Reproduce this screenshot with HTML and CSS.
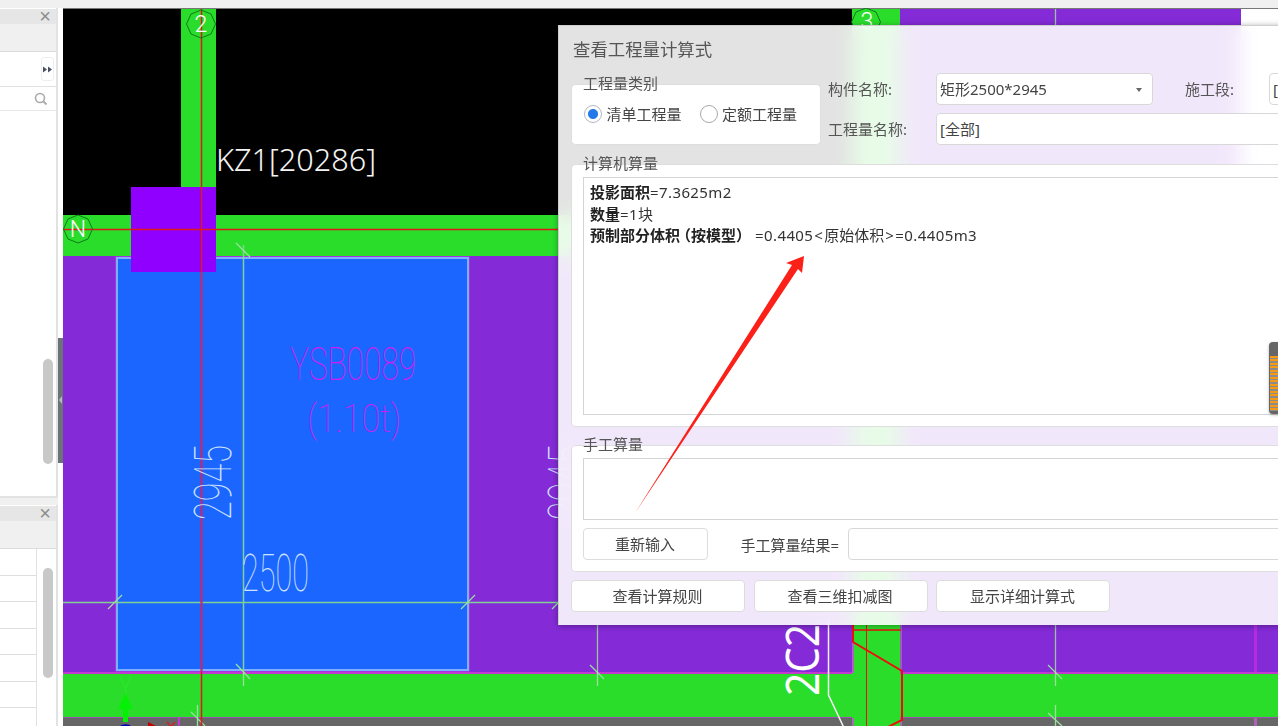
FILE: index.html
```html
<!DOCTYPE html>
<html lang="zh-CN">
<head>
<meta charset="utf-8">
<title>查看工程量计算式</title>
<link rel="stylesheet" href="styles.css">
</head>
<body>
<div class="app">
  <aside class="side">
    <section class="panel panel-top">
      <div class="panel-head"><span class="close">×</span></div>
      <div class="panel-tools"></div>
      <div class="panel-row"><span class="more">
        <svg width="9" height="7" viewBox="0 0 9 7"><path d="M0 .5 4 3.500 0 6.500Z M5 .5 9 3.500 5 6.500Z" fill="#4a4f63"/></svg>
      </span></div>
      <div class="panel-search">
        <svg width="14" height="14" viewBox="0 0 14 14"><circle cx="6" cy="6" r="4.500" fill="none" stroke="#aaa" stroke-width="1.600"/><path d="M9.500 9.500 12.500 12.500" stroke="#aaa" stroke-width="1.800"/></svg>
      </div>
      <div class="panel-body"><span class="thumb thumb-a"></span></div>
    </section>
    <section class="panel panel-bottom">
      <div class="panel-head"><span class="close">×</span></div>
      <div class="panel-tools"></div>
      <div class="grid-body">
        <div class="grid-rows">
          <div class="grid-row"></div><div class="grid-row"></div><div class="grid-row"></div>
          <div class="grid-row"></div><div class="grid-row"></div><div class="grid-row"></div>
        </div>
        <span class="thumb thumb-b"></span>
      </div>
    </section>
  </aside>
  <div class="splitter"><span class="split-bar"><i class="split-arrow"></i></span></div>
  <main class="viewport">
    <svg class="drawing" width="1215" height="718" viewBox="63 8 1215 718">
      <rect x="63" y="8" width="1215" height="718" fill="#000"/>
      <rect x="63" y="8" width="1215" height="1" fill="#777"/>
      <rect x="900" y="9" width="341" height="640" fill="#842bd7"/>
      <rect x="181" y="9" width="35" height="190" fill="#2bdd2b"/>
      <rect x="63" y="215" width="1178" height="41" fill="#2bdd2b"/>
      <rect x="63" y="256" width="790" height="416" fill="#842bd7"/>
      <rect x="900" y="256" width="378" height="416" fill="#842bd7"/>
      <rect x="1241" y="9" width="37" height="250" fill="#fff"/>
      <rect x="63" y="672" width="1215" height="2" fill="#c43ad0"/>
      <rect x="63" y="674" width="1215" height="44" fill="#2bdd2b"/>
      <rect x="63" y="718" width="790" height="8" fill="#666"/>
      <rect x="902" y="718" width="376" height="8" fill="#666"/>
      <rect x="63" y="717" width="1215" height="1" fill="#a050b0"/>
      <rect x="852" y="9" width="48" height="717" fill="#2bdd2b"/>
      <rect x="852" y="625" width="2" height="48" fill="#b060c0"/>
      <rect x="900" y="625" width="2" height="48" fill="#9a60b8"/>
      <rect x="900" y="718" width="2" height="8" fill="#a070b0"/>
      <rect x="852" y="718" width="2" height="8" fill="#a070b0"/>
      <rect x="1254" y="625" width="3" height="47" fill="#b52ce0"/>
      <rect x="1254" y="718" width="3" height="8" fill="#b060b8"/>
      <rect x="178" y="718" width="2" height="8" fill="#c43ad0"/>

      <rect x="115.500" y="256.500" width="354" height="415" fill="#c040f0"/>
      <rect x="117" y="258" width="351" height="412" fill="#1a66ff" stroke="#7fb0ff" stroke-width="2"/>

      <g stroke="#7fd292" stroke-width="1.500" fill="none">
        <path d="M243.500 245V672M63 602.500H558"/>
      </g>
      <path d="M597.500 625V672M1055.500 9V25M1055.500 625V672" stroke="#9fc09f" stroke-width="1.300" fill="none"/>
      <g stroke="#98e09c" stroke-width="1.300" fill="none">
        <path d="M236 243 250 257"/>
        <path d="M108 609 122 595M461 609 475 595M552 609 558 603"/>
        <path d="M236 664 243.500 672 250 679M243.500 672V686"/>
        <path d="M590 665 604 679M597.500 672V686"/>
        <path d="M191 712 205 726M197.500 705V726M1048 665 1062 679M1055.500 672V686M1048 713 1062 726M1055.500 705V726"/>
      </g>

      <rect x="131" y="187" width="85" height="85" fill="#8f00ff"/>
      <path d="M201.500 9V726M63 229.500H558" stroke="#e01818" stroke-width="1.500" fill="none"/>
      <path d="M201.500 272V672" stroke="#c0287a" stroke-width="1.800" fill="none"/>

      <g fill="none" stroke="#0f7a1c" stroke-width="1">
        <path d="M201 10 211 14 215.500 24 211 34 201 38 191 34 186.500 24 191 14Z"/>
        <path d="M78 215 88 219 92.500 229 88 239 78 243 68 239 63.500 229 68 219Z"/>
        <path d="M866 8 876 12 880.500 22 876 32 866 36 856 32 851.500 22 856 12Z"/>
      </g>
      <text class="axis" x="201" y="32" text-anchor="middle">2</text>
      <text class="axis" x="78" y="237" text-anchor="middle">N</text>
      <text class="axis" x="867" y="29" text-anchor="middle">3</text>

      <text class="label-kz" x="216" y="171" textLength="160" lengthAdjust="spacingAndGlyphs">KZ1[20286]</text>
      <text class="cad cad-pink" x="290" y="380" textLength="126" lengthAdjust="spacingAndGlyphs">YSB0089</text>
      <text class="cad cad-pink-sm" x="307" y="432" textLength="94" lengthAdjust="spacingAndGlyphs">(1.10t)</text>
      <text class="cad cad-dim" x="242" y="591" textLength="67" lengthAdjust="spacingAndGlyphs">2500</text>
      <text class="cad cad-dim" transform="translate(231 520) rotate(-90)" x="0" y="0" textLength="75" lengthAdjust="spacingAndGlyphs">2945</text>
      <text class="cad cad-dim" transform="translate(585 520) rotate(-90)" x="0" y="0" textLength="75" lengthAdjust="spacingAndGlyphs">2945</text>
      <text class="label-2c" transform="translate(819 696) rotate(-90)" x="0" y="0" textLength="72" lengthAdjust="spacingAndGlyphs">2C2</text>

      <path d="M828.500 620V695L845 730" stroke="#f4f4f4" stroke-width="1.500" fill="none"/>
      <g stroke="#ee0d0d" fill="none">
        <path d="M853 630H901" stroke-width="1.500"/>
        <path d="M866.500 625V726" stroke-width="1"/>
        <path d="M853 625V642L902 671V720L888 727" stroke-width="2"/>
      </g>

      <path d="M125 693 118 709H123V722H128V709H133Z" fill="#06f006"/>
      <path d="M120 677 125.500 688 131 677M125.500 688V693" stroke="#22ee22" stroke-width="1" fill="none"/>
      <path d="M120 726a6 3 0 0 1 11 0Z" fill="#0000b0"/>
      <path d="M148 722 156 726H148Z" fill="#c00000"/>
      <path d="M167 722 175 731M175 722 167 731" stroke="#e01818" stroke-width="1.300"/>
    </svg>

    <section class="dialog">
      <h1 class="dialog-title">查看工程量计算式</h1>
      <div class="dialog-top">
        <fieldset class="group group-kind">
          <legend class="legend">工程量类别</legend>
          <label class="radio"><span class="radio-dot is-on"></span>清单工程量</label>
          <label class="radio"><span class="radio-dot"></span>定额工程量</label>
        </fieldset>
        <div class="fields">
          <div class="field-row">
            <span class="field-label">构件名称:</span>
            <span class="box box-select">矩形2500*2945<i class="caret"></i></span>
            <span class="field-label field-label-stage">施工段:</span>
            <span class="box box-stage">[全部]</span>
          </div>
          <div class="field-row">
            <span class="field-label">工程量名称:</span>
            <span class="box box-wide">[全部]</span>
          </div>
        </div>
      </div>

      <fieldset class="group group-auto">
        <legend class="legend">计算机算量</legend>
        <div class="result">
          <p class="line"><b>投影面积</b><span class="num">=7.3625m2</span></p>
          <p class="line"><b>数量</b><span class="num">=1</span>块</p>
          <p class="line"><b>预制部分体积<span class="paren">（按模型）</span></b><span class="num num-gap">=0.4405</span><span class="num num-lt">&lt;</span>原始体积<span class="num num-lt">&gt;</span><span class="num">=0.4405m3</span></p>
          <span class="stripe-bar"><i class="stripes"></i></span>
        </div>
      </fieldset>

      <fieldset class="group group-manual">
        <legend class="legend">手工算量</legend>
        <div class="manual-input"></div>
        <div class="manual-row">
          <button class="btn btn-reset" type="button">重新输入</button>
          <span class="manual-label">手工算量结果=</span>
          <span class="box box-result"></span>
        </div>
      </fieldset>

      <div class="dialog-actions">
        <button class="btn btn-action" type="button">查看计算规则</button>
        <button class="btn btn-action" type="button">查看三维扣减图</button>
        <button class="btn btn-action" type="button">显示详细计算式</button>
      </div>
    </section>

    <svg class="arrow" width="190" height="270" viewBox="630 250 190 270">
      <path d="M635 513 792 265 786 263 804 256 802 273 798 269Z" fill="#fb2018"/>
    </svg>
  </main>
</div>
</body>
</html>
```
FILE: styles.css
```css
* { box-sizing: border-box; }
html, body { margin: 0; height: 100%; overflow: hidden; background: #f0f0f0; }
body { font-family: "Noto Sans", "Noto Sans CJK SC", sans-serif; color: #444; }

.app { display: flex; width: 1278px; height: 726px; padding-top: 8px; overflow: hidden; }

/* left dock */
.side { width: 58px; height: 718px; display: flex; flex-direction: column; flex: none; }
.panel { background: #fff; border-right: 2px solid #e2e2e2; display: flex; flex-direction: column; }
.panel-top { height: 490px; border-bottom: 2px solid #e2e2e2; }
.panel-bottom { margin-top: 7px; flex: 1; }
.panel-head { height: 15px; margin-top: 1px; background: #e6e6e6; position: relative; flex: none; text-align: right; padding-right: 5px; }
.close { font: 20px/15px "Liberation Sans", sans-serif; color: #8c8c8c; display: block; }
.panel-tools { height: 28px; background: #f0f0f0; border-bottom: 1px solid #dcdcdc; flex: none; }
.panel-row { height: 35px; border-bottom: 1px solid #e0e0e0; display: flex; justify-content: flex-end; align-items: center; padding-right: 2px; flex: none; }
.more { width: 13px; height: 24px; border: 1px solid #eee; border-radius: 3px; display: flex; align-items: center; justify-content: center; }
.panel-search { height: 24px; border-bottom: 1px solid #e6e6e6; display: flex; justify-content: flex-end; align-items: center; padding-right: 8px; flex: none; }
.panel-body { flex: 1; position: relative; }
.thumb { position: absolute; display: block; width: 10px; left: 43px; background: #c8c8c8; border-radius: 5px; }
.thumb-a { top: 248px; height: 105px; }
.thumb-b { top: 19px; height: 110px; }
.grid-body { flex: 1; position: relative; }
.grid-rows { width: 37px; border-right: 1px solid #e2e2e2; height: 100%; padding-top: 0; }
.grid-row { height: 26.500px; border-bottom: 1px solid #dedede; }

.splitter { width: 5px; height: 718px; background: #fff; flex: none; position: relative; }
.split-bar { position: absolute; left: 0; top: 330px; width: 5px; height: 125px; background: #6b7378; }
.split-arrow { position: absolute; left: 1px; top: 58px; border: 4px solid transparent; border-left-width: 0; border-right: 3px solid #b8bcc0; }

/* drawing */
.viewport { flex: none; width: 1215px; height: 718px; position: relative; overflow: hidden; }
.drawing { display: block; }
.axis { font: 300 23px "Roboto", sans-serif; fill: #fff; }
.label-kz { font: 300 32px "Noto Sans", sans-serif; fill: #f4f4f4; }
.cad { font-family: "Roboto", sans-serif; font-weight: 100; }
.cad-pink { font-size: 47px; fill: #d21cf0; }
.cad-pink-sm { font-size: 38px; fill: #d21cf0; }
.cad-dim { font-size: 51px; fill: #cfe2ff; }
.label-2c { font: 46px "Noto Sans", sans-serif; fill: #fff; }
.arrow { position: absolute; left: 567px; top: 242px; }

/* dialog */
.dialog { position: absolute; left: 495px; top: 17px; width: 770px; height: 600px; padding: 0 13px; background: rgba(255, 255, 255, .89); -webkit-backdrop-filter: blur(10px); backdrop-filter: blur(10px); box-shadow: 0 1px 6px rgba(0, 0, 0, .35); border-top: 1px solid #cfcfcf; border-left: 1px solid #cfcfcf; }
.dialog-title { margin: 0; padding: 10px 0 0 1px; font-size: 17.400px; line-height: 26px; height: 37px; font-weight: 400; color: #555; }
.dialog-top { display: flex; align-items: flex-start; gap: 8px; height: 102px; }
.group { margin: 0; padding: 0; min-width: 0; border: 0; background: #fff; border-radius: 4px; box-shadow: 0 0 0 1px #dedede; position: relative; }
.legend { position: absolute; left: 11px; top: -12px; padding: 0; font-size: 15px; line-height: 20px; color: #555; white-space: nowrap; }
.group-kind { flex: none; width: 248px; height: 59px; margin-top: 22px; display: flex; gap: 18px; padding: 19px 0 0 12px; }
.radio { display: flex; align-items: center; gap: 4.500px; font-size: 15px; line-height: 20px; height: 20px; color: #444; white-space: nowrap; }
.radio-dot { width: 18px; height: 18px; border-radius: 50%; background: #fff; border: 1px solid #a8a8a8; flex: none; display: block; }
.radio-dot.is-on { background: radial-gradient(circle, #2478e8 0 4.500px, #fff 5.500px); border-color: #b0b8c4; }
.fields { flex: none; width: 480px; padding-top: 10px; display: flex; flex-direction: column; gap: 8px; }
.field-row { display: flex; align-items: center; height: 32px; }
.field-label { width: 108px; font-size: 15px; line-height: 20px; color: #555; flex: none; }
.field-label-stage { width: 84px; margin-left: 32px; }
.box { height: 32px; display: flex; align-items: center; padding: 0 3px 2px; background: #fff; border: 1px solid #d8d8d8; border-radius: 4px; font-size: 15px; color: #444; flex: none; position: relative; }
.box-select { width: 217px; }
.box-stage { width: 100px; }
.box-wide { width: 420px; }
.caret { position: absolute; right: 10px; top: 14px; border: 3px solid transparent; border-top: 4px solid #666; border-bottom: 0; }

.group-auto { height: 261px; padding: 12px 11px; width: 760px; }
.result { height: 238px; border: 1px solid #d4d4d4; padding: 4px 6px; position: relative; overflow: visible; width: 700px; }
.line { margin: 0; font-size: 15px; line-height: 21.500px; color: #333; white-space: pre; }
.line b { font-weight: 700; color: #222; }
.num { letter-spacing: .4px; }
.paren { margin: 0 -4px; }
.num-gap { margin-left: 8px; }
.num-lt { margin: 0 1px; }
.stripe-bar { position: absolute; left: 685px; top: 164px; width: 12px; height: 72px; border-radius: 4px; background: #666; padding: 14px 1px 3px; display: block; box-shadow: 0 1px 3px rgba(0,0,0,.3); }
.stripes { display: block; height: 100%; background: repeating-linear-gradient(#f59a16 0 2px, #8b8b8b 2px 3.500px); }

.group-manual { height: 125px; margin-top: 20px; padding: 12px 11px 0; width: 760px; }
.manual-input { height: 62px; width: 700px; border: 1px solid #d4d4d4; }
.manual-row { display: flex; align-items: center; margin-top: 8px; }
.btn { height: 32px; background: #fff; border: 1px solid #dcdcdc; border-radius: 4px; font: 15px/20px "Noto Sans", "Noto Sans CJK SC", sans-serif; color: #444; padding: 0 1px 0 0; flex: none; }
.btn-reset { width: 125px; }
.manual-label { margin-left: 32.500px; width: 107px; font-size: 15px; color: #444; white-space: nowrap; flex: none; }
.box-result { width: 440px; }
.dialog-actions { display: flex; gap: 8.500px; margin-top: 9px; margin-left: -1px; }
.btn-action { width: 174px; height: 32px; }
```
